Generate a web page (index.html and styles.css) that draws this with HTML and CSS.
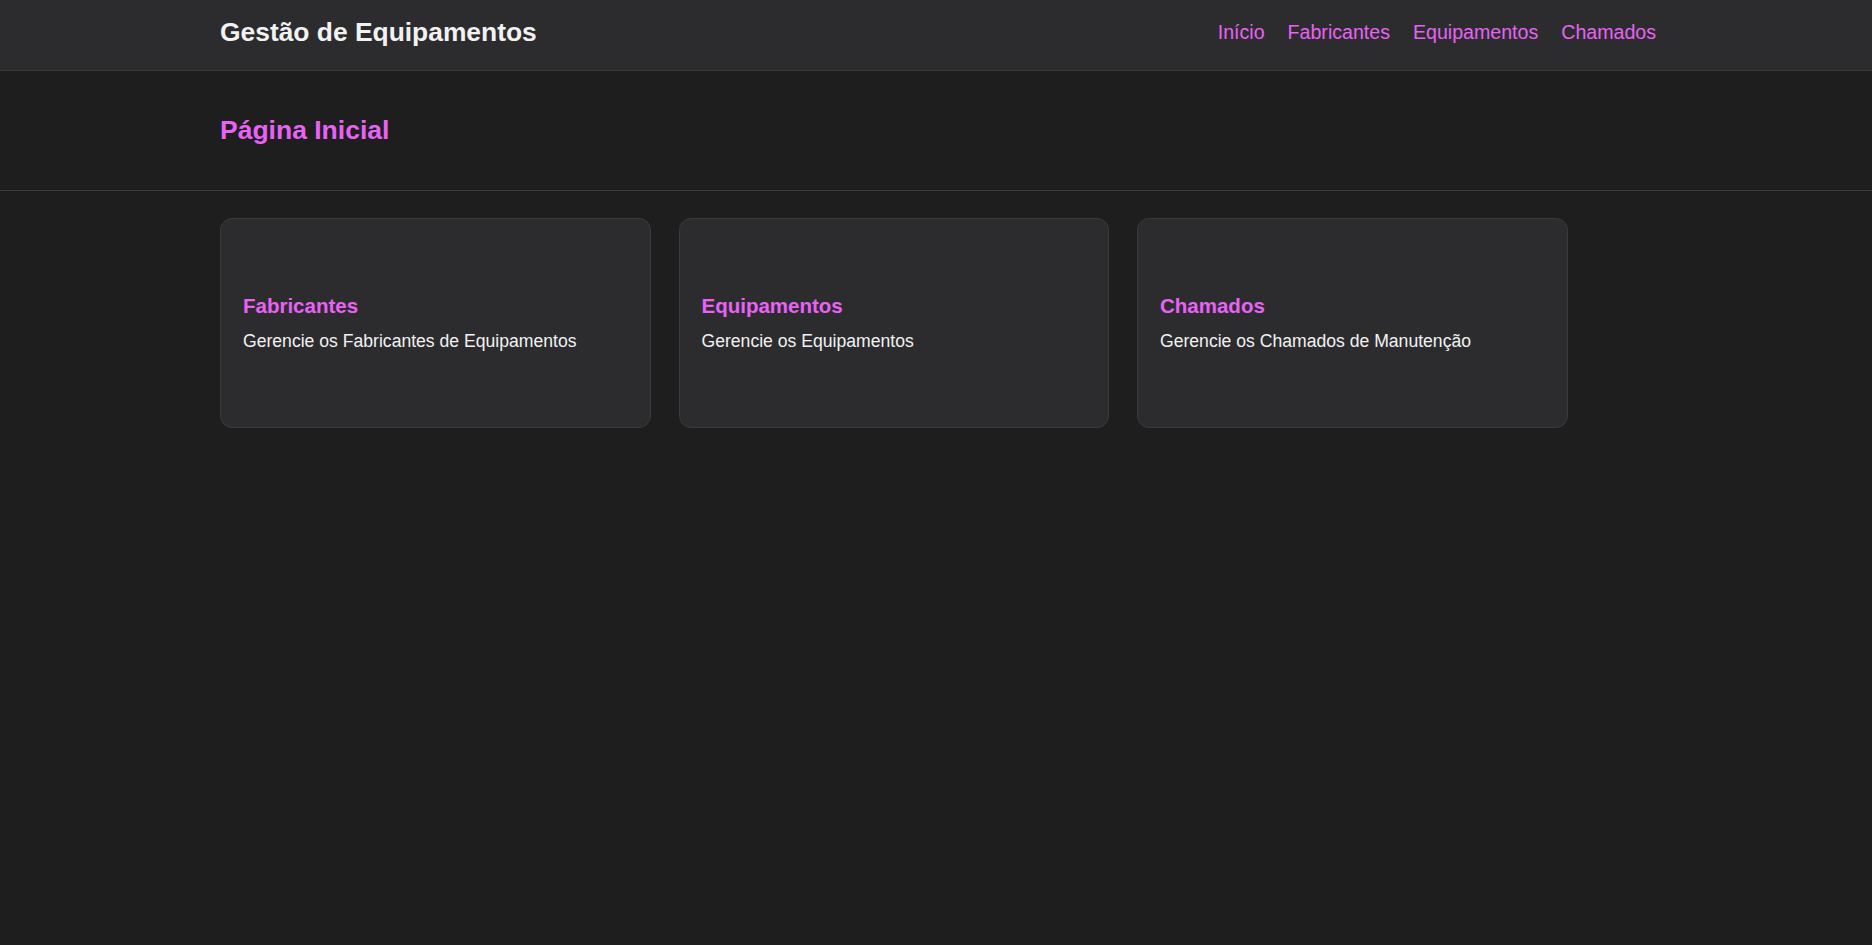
FILE: index.html
```html
<!DOCTYPE html>
<html lang="pt-BR">
<head>
<meta charset="utf-8">
<title>Gestão de Equipamentos</title>
<link rel="stylesheet" href="styles.css">
</head>
<body>
<header class="topbar">
  <div class="container topbar-inner">
    <div class="brand">Gestão de Equipamentos</div>
    <nav class="nav">
      <a href="#">Início</a>
      <a href="#">Fabricantes</a>
      <a href="#">Equipamentos</a>
      <a href="#">Chamados</a>
    </nav>
  </div>
</header>
<section class="page-head">
  <div class="container">
    <h1 class="page-title">Página Inicial</h1>
  </div>
</section>
<main class="container">
  <div class="cards">
    <a class="card" href="#">
      <h2 class="card-title">Fabricantes</h2>
      <p class="card-text">Gerencie os Fabricantes de Equipamentos</p>
    </a>
    <a class="card" href="#">
      <h2 class="card-title">Equipamentos</h2>
      <p class="card-text">Gerencie os Equipamentos</p>
    </a>
    <a class="card" href="#">
      <h2 class="card-title">Chamados</h2>
      <p class="card-text">Gerencie os Chamados de Manutenção</p>
    </a>
  </div>
</main>
</body>
</html>
```

FILE: styles.css
```css
* { box-sizing: border-box; }
html, body {
  margin: 0;
  padding: 0;
  background: #1e1e1e;
  color: #f2f2f2;
  font-family: "Liberation Sans", Arial, sans-serif;
}
.container {
  max-width: 1440px;
  margin: 0 auto;
  padding-left: 4px;
}
.topbar {
  background: #2c2c2e;
  border-bottom: 1px solid #3a3a3c;
}
.topbar-inner {
  height: 70px;
  display: flex;
  align-items: center;
  justify-content: space-between;
  padding-bottom: 6px;
}
.brand {
  font-size: 26.4px;
  font-weight: bold;
  color: #f2f2f2;
}
.nav {
  display: flex;
  gap: 23px;
}
.nav a {
  color: #e862f5;
  text-decoration: none;
  font-size: 19.6px;
}
.page-head {
  border-bottom: 1px solid #3a3a3c;
  padding: 44px 0 44px;
}
.page-title {
  margin: 0;
  font-size: 26.5px;
  font-weight: bold;
  color: #e862f5;
}
.cards {
  display: grid;
  grid-template-columns: repeat(3, 430.5px);
  gap: 28px;
  margin-top: 27px;
}
.card {
  height: 210px;
  display: flex;
  flex-direction: column;
  justify-content: center;
  padding: 0 22px;
  background: #2c2c2e;
  border: 1px solid #3a3a3c;
  border-radius: 12px;
  text-decoration: none;
}
.card-title {
  margin: 0 0 12.5px;
  font-size: 20.5px;
  font-weight: bold;
  color: #e862f5;
}
.card-text {
  margin: 0;
  font-size: 17.6px;
  color: #f2f2f2;
}
```
